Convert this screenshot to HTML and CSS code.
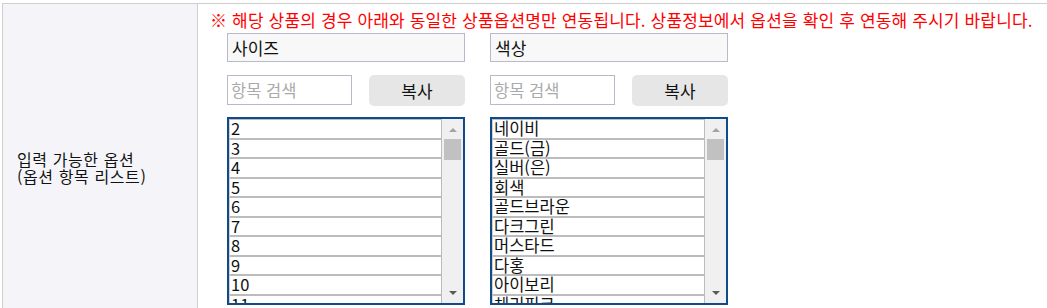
FILE: index.html
```html
<!DOCTYPE html>
<html lang="ko">
<head>
<meta charset="utf-8">
<title>옵션 항목 리스트</title>
<link rel="stylesheet" href="styles.css">
</head>
<body>
<div class="table">
  <div class="label-cell">입력 가능한 옵션<br>(옵션 항목 리스트)</div>
  <div class="value-cell">
    <p class="notice">※ 해당 상품의 경우 아래와 동일한 상품옵션명만 연동됩니다. 상품정보에서 옵션을 확인 후 연동해 주시기 바랍니다.</p>
    <div class="columns">
      <div class="col">
        <input class="name" type="text" value="사이즈" readonly>
        <div class="search-row">
          <input class="search" type="text" placeholder="항목 검색">
          <button class="copy" type="button">복사</button>
        </div>
        <div class="listbox">
          <div class="items">
            <div class="item">2</div>
            <div class="item">3</div>
            <div class="item">4</div>
            <div class="item">5</div>
            <div class="item">6</div>
            <div class="item">7</div>
            <div class="item">8</div>
            <div class="item">9</div>
            <div class="item">10</div>
            <div class="item">11</div>
          </div>
          <div class="scrollbar">
            <div class="arrow up"></div>
            <div class="thumb"></div>
            <div class="track"></div>
            <div class="arrow down"></div>
          </div>
        </div>
      </div>
      <div class="col">
        <input class="name" type="text" value="색상" readonly>
        <div class="search-row">
          <input class="search" type="text" placeholder="항목 검색">
          <button class="copy" type="button">복사</button>
        </div>
        <div class="listbox">
          <div class="items">
            <div class="item">네이비</div>
            <div class="item">골드(금)</div>
            <div class="item">실버(은)</div>
            <div class="item">회색</div>
            <div class="item">골드브라운</div>
            <div class="item">다크그린</div>
            <div class="item">머스타드</div>
            <div class="item">다홍</div>
            <div class="item">아이보리</div>
            <div class="item">체리핑크</div>
          </div>
          <div class="scrollbar">
            <div class="arrow up"></div>
            <div class="thumb"></div>
            <div class="track"></div>
            <div class="arrow down"></div>
          </div>
        </div>
      </div>
    </div>
  </div>
</div>
</body>
</html>
```
FILE: styles.css
```css
html, body {
  margin: 0;
  padding: 0;
  background: #fff;
  overflow: hidden;
}
body {
  font-family: "Noto Sans CJK KR", "Noto Sans", sans-serif;
  color: #111;
}
.table {
  margin: 3px 0 0 2px;
  border-top: 1px solid #cfcfcf;
  border-left: 1px solid #cfcfcf;
  display: grid;
  grid-template-columns: 195px 1fr;
}
.label-cell {
  background: #f5f5f9;
  border-right: 1px solid #cfcfcf;
  display: flex;
  align-items: center;
  padding-left: 14px;
  font-size: 16px;
  line-height: 17px;
  letter-spacing: 0.6px;
  color: #111;
}
.value-cell {
  padding: 5px 0 27px 12px;
}
.notice {
  margin: 0;
  color: #ff0000;
  font-size: 17px;
  line-height: 22px;
  letter-spacing: 0.16px;
  white-space: nowrap;
}
.columns {
  display: flex;
  gap: 25px;
  margin: 2px 0 0 17px;
}
.col {
  width: 238px;
  display: flex;
  flex-direction: column;
}
.name {
  box-sizing: border-box;
  height: 29px;
  width: 100%;
  margin: 0;
  border: 1px solid #b7bac8;
  background: #f8f8f8;
  padding: 0 4px;
  font: 17px "Noto Sans CJK KR", sans-serif;
  color: #111;
  outline: none;
}
.search-row {
  display: flex;
  gap: 17px;
  margin-top: 13px;
}
.search {
  box-sizing: border-box;
  width: 125px;
  height: 30px;
  margin: 0;
  border: 1px solid #b7bac8;
  background: #fff;
  padding: 0 3px;
  font: 16.5px "Noto Sans CJK KR", sans-serif;
  outline: none;
}
.search::placeholder {
  color: #aaa;
}
.copy {
  width: 96px;
  height: 31px;
  margin: 0;
  border: none;
  border-radius: 5px;
  background: #e6e6e6;
  font: 17px "Noto Sans CJK KR", sans-serif;
  color: #111;
  padding: 0;
}
.listbox {
  margin-top: 11px;
  height: 188px;
  box-sizing: border-box;
  border: 2px solid #0f4a8a;
  display: flex;
  overflow: hidden;
}
.items {
  width: 213px;
}
.item {
  box-sizing: border-box;
  height: 19.5px;
  border: 1px solid #bcbcbc;
  border-left-color: #d0d0d0;
  font-size: 16.5px;
  line-height: 17.5px;
  padding-left: 1px;
  white-space: nowrap;
  color: #111;
}
.scrollbar {
  flex: 1;
  background: #f0f0f0;
  display: flex;
  flex-direction: column;
  align-items: center;
}
.arrow {
  width: 0;
  height: 0;
  border-left: 4px solid transparent;
  border-right: 4px solid transparent;
}
.arrow.up {
  margin: 9px 0 7px;
  border-bottom: 4px solid #a3a3a3;
}
.arrow.down {
  margin: 0 0 8px;
  border-top: 4px solid #5a5a5a;
}
.thumb {
  width: 17px;
  height: 21px;
  background: #c1c1c1;
}
.track {
  flex: 1;
}
```
